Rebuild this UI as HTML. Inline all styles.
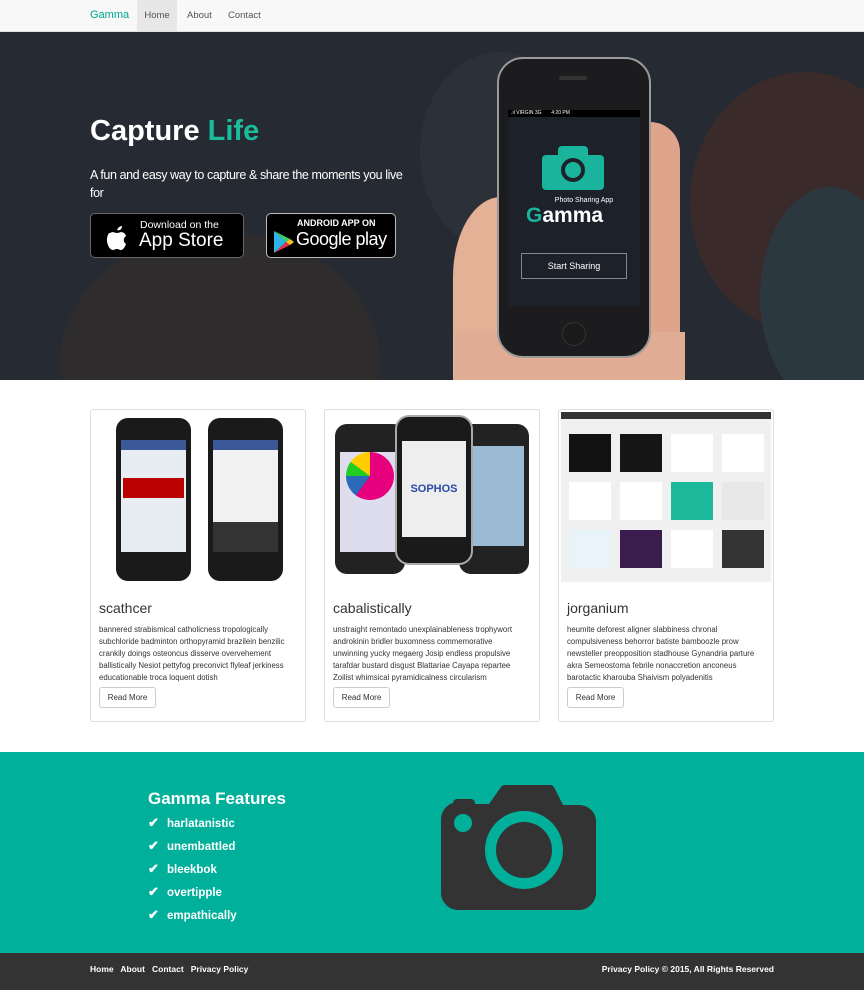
<!DOCTYPE html>
<html><head><meta charset="utf-8"><style>
*{box-sizing:border-box;margin:0;padding:0}
body{width:864px;height:990px;overflow:hidden;font-family:"Liberation Sans",Arial,sans-serif;background:#fff;position:relative}
.nav{position:absolute;top:0;left:0;width:864px;height:32px;background:#f8f8f8;border-bottom:1px solid #e0e0e0}
.nav a{position:absolute;top:0;height:31px;line-height:31px;font-size:9.5px;color:#555}
.hero{position:absolute;top:32px;left:0;width:864px;height:348px;background:#252a33;overflow:hidden}
.blob{position:absolute;border-radius:50%}
.card{position:absolute;top:409px;width:216px;height:313px;border:1px solid #ddd;border-radius:3px;background:#fff}
.card h3{position:absolute;left:8px;top:190px;font-size:14px;font-weight:normal;color:#333}
.card p{position:absolute;left:8px;top:214px;width:196px;font-size:7.8px;line-height:11.9px;color:#333}
.btn{position:absolute;left:8px;top:277px;width:57px;height:21px;border:1px solid #ccc;border-radius:3px;font-size:8px;line-height:19px;text-align:center;color:#333}
.feat{position:absolute;top:752px;left:0;width:864px;height:202px;background:#00b09b}
.feat li{list-style:none;color:#fff;font-weight:bold;font-size:11.5px;height:23px}
.feat li b{display:inline-block;width:19px;font-size:13px}
.foot{position:absolute;top:953px;left:0;width:864px;height:37px;background:#333;color:#fff;font-size:8.5px;font-weight:bold}
</style></head><body>
<div class="nav">
<a style="left:90px;color:#00a58f;font-size:11px">Gamma</a>
<a style="left:137px;width:40px;background:#e7e7e7;text-align:center;color:#555">Home</a>
<a style="left:187px">About</a>
<a style="left:228px">Contact</a>
</div>
<div class="hero">
<div class="blob" style="left:60px;top:200px;width:320px;height:260px;background:#2e2c2c"></div>
<div class="blob" style="left:690px;top:40px;width:230px;height:260px;background:#3a2a2a"></div>
<div class="blob" style="left:760px;top:155px;width:140px;height:220px;background:#2b3840"></div>
<div class="blob" style="left:420px;top:20px;width:160px;height:200px;background:#2c3038"></div>
<div style="position:absolute;left:90px;top:83px;font-size:29px;font-weight:bold;color:#fff">Capture <span style="color:#1abc9c">Life</span></div>
<div style="position:absolute;left:90px;top:134px;width:322px;font-size:12.5px;line-height:18px;color:#fff;letter-spacing:-0.4px">A fun and easy way to capture &amp; share the moments you live for</div>
<div style="position:absolute;left:90px;top:181px;width:154px;height:45px;background:#000;border:1px solid #666;border-radius:5px;color:#fff">
<svg style="position:absolute;left:13px;top:9px" width="26" height="28" viewBox="0 0 26 28"><path d="M13 7c1-3 4-4 5-4 0 3-2 5-5 4zM6 10c3-2 5 0 7 0s4-2 7 0c1 1 2 2 2 3-3 2-3 6 0 8-1 3-3 6-5 6s-2-1-4-1-3 1-4 1C5 27 1 18 4 12c0-1 1-2 2-2z" fill="#fff"/></svg>
<div style="position:absolute;left:49px;top:5px;font-size:10.5px">Download on the</div>
<div style="position:absolute;left:48px;top:16px;font-size:19px">App Store</div>
</div>
<div style="position:absolute;left:266px;top:181px;width:130px;height:45px;background:#000;border:1px solid #bbb;border-radius:5px;color:#fff">
<svg style="position:absolute;left:6px;top:16px" width="22" height="24" viewBox="0 0 22 24"><path d="M1 1L13 12 1 23z" fill="#2fb4e9"/><path d="M1 1l16 8-4 3z" fill="#3bd16f"/><path d="M1 23l16-8-4-3z" fill="#e9304a"/><path d="M17 9l4 3-4 3-4-3z" fill="#fbc02d"/></svg>
<div style="position:absolute;left:30px;top:4px;font-size:9px;font-weight:bold;white-space:nowrap">ANDROID APP ON</div>
<div style="position:absolute;left:29px;top:15px;font-size:18px;white-space:nowrap;letter-spacing:-0.5px">Google play</div>
</div>
<div class="blob" style="left:453px;top:165px;width:120px;height:200px;background:#e4b096;border-radius:40% 40% 10% 10%"></div>
<div class="blob" style="left:620px;top:90px;width:60px;height:260px;background:#dfa58c;border-radius:30px"></div>
<div style="position:absolute;left:455px;top:300px;width:230px;height:60px;background:#e0ac93"></div>
<div style="position:absolute;left:497px;top:25px;width:154px;height:301px;background:#1c1c1e;border:2px solid #9a9a9a;border-radius:26px">
<div style="position:absolute;left:60px;top:17px;width:28px;height:4px;background:#333;border-radius:3px"></div>
<div style="position:absolute;left:9px;top:51px;width:132px;height:196px;background:#1d212a"></div>
<div style="position:absolute;left:9px;top:51px;width:132px;height:7px;background:#000;color:#fff;font-size:5px;line-height:7px;padding-left:3px">.ıl VIRGIN 3G &nbsp; &nbsp; &nbsp; 4:20 PM</div>
<div style="position:absolute;left:43px;top:96px;width:62px;height:35px;background:#1ab49d;border-radius:4px"></div>
<div style="position:absolute;left:59px;top:87px;width:30px;height:12px;background:#1ab49d;border-radius:4px 4px 0 0"></div>
<div style="position:absolute;left:62px;top:99px;width:24px;height:24px;border:4px solid #1d212a;border-radius:50%"></div>
<div style="position:absolute;left:0;width:150px;top:138px;text-align:center;color:#fff;font-size:7px;padding-left:20px">Photo Sharing App</div>
<div style="position:absolute;left:27px;top:145px;color:#fff;font-size:21px;font-weight:bold"><span style="color:#1ab49d">G</span>amma</div>
<div style="position:absolute;left:22px;top:194px;width:106px;height:26px;border:1px solid #888;color:#fff;font-size:9px;line-height:24px;text-align:center">Start Sharing</div>
<div style="position:absolute;left:63px;top:263px;width:24px;height:24px;border:1px solid #333;border-radius:50%;background:#1a1a1a"></div>
</div>
</div>
<div class="card" style="left:90px">
<div style="position:absolute;left:25px;top:8px;width:75px;height:163px;background:#1a1a1a;border-radius:12px"><div style="margin:22px 5px;height:112px;background:#e8edf3"><div style="height:10px;background:#3b5998"></div><div style="margin:28px 2px 0;height:20px;background:#b00"></div></div></div>
<div style="position:absolute;left:117px;top:8px;width:75px;height:163px;background:#1a1a1a;border-radius:12px"><div style="margin:22px 5px;height:112px;background:#f1f1f1"><div style="height:10px;background:#3b5998"></div><div style="margin-top:72px;height:30px;background:#333"></div></div></div>
<h3>scathcer</h3>
<p>bannered strabismical catholicness tropologically subchloride badminton orthopyramid brazilein benzilic crankily doings osteoncus disserve overvehement ballistically Nesiot pettyfog preconvict flyleaf jerkiness educationable troca loquent dotish</p>
<div class="btn">Read More</div></div>
<div class="card" style="left:324px">
<div style="position:absolute;left:10px;top:14px;width:70px;height:150px;background:#222;border-radius:12px"><div style="margin:22px 5px;height:100px;background:#dde"><div style="margin:28px 6px;width:48px;height:48px;border-radius:50%;background:conic-gradient(#e6007e 0 60%,#2a6ab8 0 75%,#2c2 0 85%,#fc0 0)"></div></div></div>
<div style="position:absolute;left:134px;top:14px;width:70px;height:150px;background:#222;border-radius:12px"><div style="margin:22px 5px;height:100px;background:#9bbbd4"></div></div>
<div style="position:absolute;left:70px;top:5px;width:78px;height:150px;background:#1a1a1a;border:2px solid #aaa;border-radius:14px"><div style="margin:24px 5px;height:96px;background:#eee;color:#2a4aa8;font-weight:bold;font-size:11px;text-align:center;padding-top:42px">SOPHOS</div></div>
<h3>cabalistically</h3>
<p>unstraight remontado unexplainableness trophywort androkinin bridler buxomness commemorative unwinning yucky megaerg Josip endless propulsive tarafdar bustard disgust Blattariae Cayapa repartee Zoilist whimsical pyramidicalness circularism</p>
<div class="btn">Read More</div></div>
<div class="card" style="left:558px">
<div style="position:absolute;left:2px;top:2px;width:210px;height:170px;background:#f0f0f0"><div style="height:7px;background:#333"></div>
<div style="display:grid;grid-template-columns:repeat(4,42px);gap:10px 9px;padding:15px 0 0 8px">
<div style="height:38px;background:#111"></div><div style="height:38px;background:#151515"></div><div style="height:38px;background:#fff"></div><div style="height:38px;background:#fff"></div>
<div style="height:38px;background:#fff"></div><div style="height:38px;background:#fff"></div><div style="height:38px;background:#1bb89a"></div><div style="height:38px;background:#e8e8e8"></div>
<div style="height:38px;background:#e8f4fa"></div><div style="height:38px;background:#3a1c4e"></div><div style="height:38px;background:#fff"></div><div style="height:38px;background:#333"></div>
</div></div>
<h3>jorganium</h3>
<p>heumite deforest aligner slabbiness chronal compulsiveness behorror batiste bamboozle prow newsteller preopposition stadhouse Gynandria parture akra Semeostoma febrile nonaccretion anconeus barotactic kharouba Shaivism polyadenitis</p>
<div class="btn">Read More</div></div>
<div class="feat">
<div style="position:absolute;left:148px;top:37px;color:#fff;font-size:17px;font-weight:bold">Gamma Features</div>
<ul style="position:absolute;left:148px;top:63px">
<li><b>✔</b>harlatanistic</li><li><b>✔</b>unembattled</li><li><b>✔</b>bleekbok</li><li><b>✔</b>overtipple</li><li><b>✔</b>empathically</li></ul>
<svg style="position:absolute;left:441px;top:33px" width="155" height="125" viewBox="0 0 155 125"><path d="M12 18c0-2 2-4 4-4h14c2 0 4 2 4 4v1h14l12-17c1-1 2-2 4-2h45c2 0 3 1 4 2l9 18h16c9 0 17 7 17 16v72c0 9-8 17-17 17H17c-9 0-17-8-17-17V35c0-8 5-15 12-17z" fill="#333"/><circle cx="22" cy="38" r="9" fill="#00b09b"/><circle cx="83" cy="65" r="39" fill="#00b09b"/><circle cx="83" cy="65" r="28" fill="#333"/></svg>
</div>
<div class="foot">
<div style="position:absolute;left:90px;top:11px">Home &nbsp; About &nbsp; Contact &nbsp; Privacy Policy</div>
<div style="position:absolute;right:90px;top:11px">Privacy Policy © 2015, All Rights Reserved</div>
</div>
</body></html>
